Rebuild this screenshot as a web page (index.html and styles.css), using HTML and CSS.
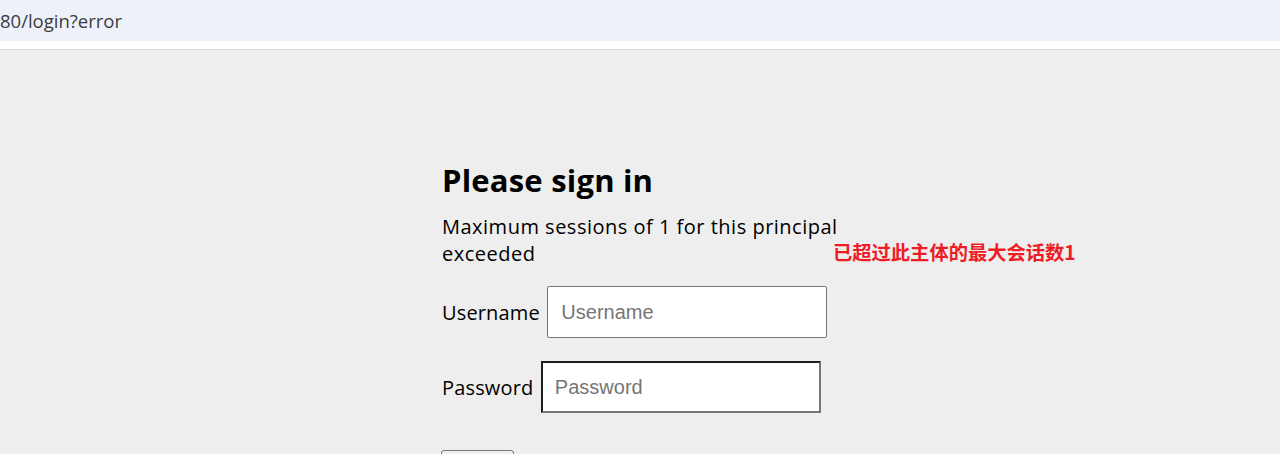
FILE: index.html
```html
<!DOCTYPE html>
<html lang="en">
<head>
<meta charset="utf-8">
<title>Please sign in</title>
<link rel="stylesheet" href="styles.css">
</head>
<body>
<header class="urlbar"><span class="url">80/login?error</span></header>
<div class="tabgap"></div>
<main class="page">
  <form class="signin" method="post" action="/login">
    <h2 class="heading">Please sign in</h2>
    <div class="alert">Maximum sessions of 1 for this principal exceeded</div>
    <p class="row">
      <label for="username" class="label">Username</label>
      <input type="text" id="username" class="field" placeholder="Username">
    </p>
    <p class="row">
      <label for="password" class="label">Password</label>
      <input type="password" id="password" class="field field-inset" placeholder="Password">
    </p>
    <button type="submit" class="btn">Sign in</button>
  </form>
  <div class="note">已超过此主体的最大会话数1</div>
</main>
</body>
</html>
```
FILE: styles.css
```css
html, body {
  margin: 0;
  padding: 0;
  height: 100%;
  overflow: hidden;
}
body {
  display: flex;
  flex-direction: column;
  font-family: "Open Sans", "Noto Sans", sans-serif;
  background: #eeeeee;
}
.urlbar {
  height: 41px;
  background: #edf2fa;
  display: flex;
  align-items: center;
  flex-shrink: 0;
}
.url {
  font-family: "Open Sans", sans-serif;
  font-size: 18.5px;
  color: #3c3c3c;
  line-height: 24px;
  margin-top: 1px;
}
.tabgap {
  height: 8px;
  background: #ffffff;
  border-bottom: 1px solid #dcdcdc;
  flex-shrink: 0;
}
.page {
  position: relative;
  flex: 1;
  background: #eeeeee;
  padding-left: 442px;
  padding-top: 110px;
}
.signin {
  width: 412px;
  margin: 0;
}
.heading {
  margin: 0;
  font-size: 31px;
  line-height: 40px;
  font-weight: 700;
  letter-spacing: 0.2px;
  color: #000;
}
.alert {
  margin-top: 13px;
  font-size: 20px;
  line-height: 27px;
  letter-spacing: 0.5px;
  color: #000;
}
.row {
  margin: 19px 0 0;
  display: flex;
  align-items: center;
  gap: 7.5px;
  font-size: 20px;
  line-height: 27px;
}
.row + .row {
  margin-top: 23px;
}
.label {
  color: #000;
  letter-spacing: 0.15px;
}
.field {
  box-sizing: border-box;
  width: 280px;
  height: 52px;
  padding: 0 13px;
  border: 1px solid #767676;
  border-radius: 2px;
  background: #fff;
  font-family: "Liberation Sans", Arial, sans-serif;
  font-size: 20px;
  color: #000;
  outline: none;
}
.field::placeholder {
  color: #757575;
}
.field-inset {
  border-width: 2px;
  border-style: solid;
  border-color: #1e1e1e #767676 #767676 #1e1e1e;
  border-radius: 0;
  padding-left: 12px;
}
.btn {
  display: block;
  margin-top: 37px;
  margin-left: -1px;
  width: 73px;
  height: 40px;
  border: 1px solid #767676;
  border-radius: 3px;
  background: #efefef;
  font-family: "Liberation Sans", Arial, sans-serif;
  font-size: 17px;
  color: #000;
}
.note {
  position: absolute;
  left: 833px;
  top: 191px;
  font-family: "Noto Sans CJK SC", sans-serif;
  font-size: 19.3px;
  line-height: 22px;
  font-weight: 700;
  color: #ee1c25;
  white-space: nowrap;
}
```
